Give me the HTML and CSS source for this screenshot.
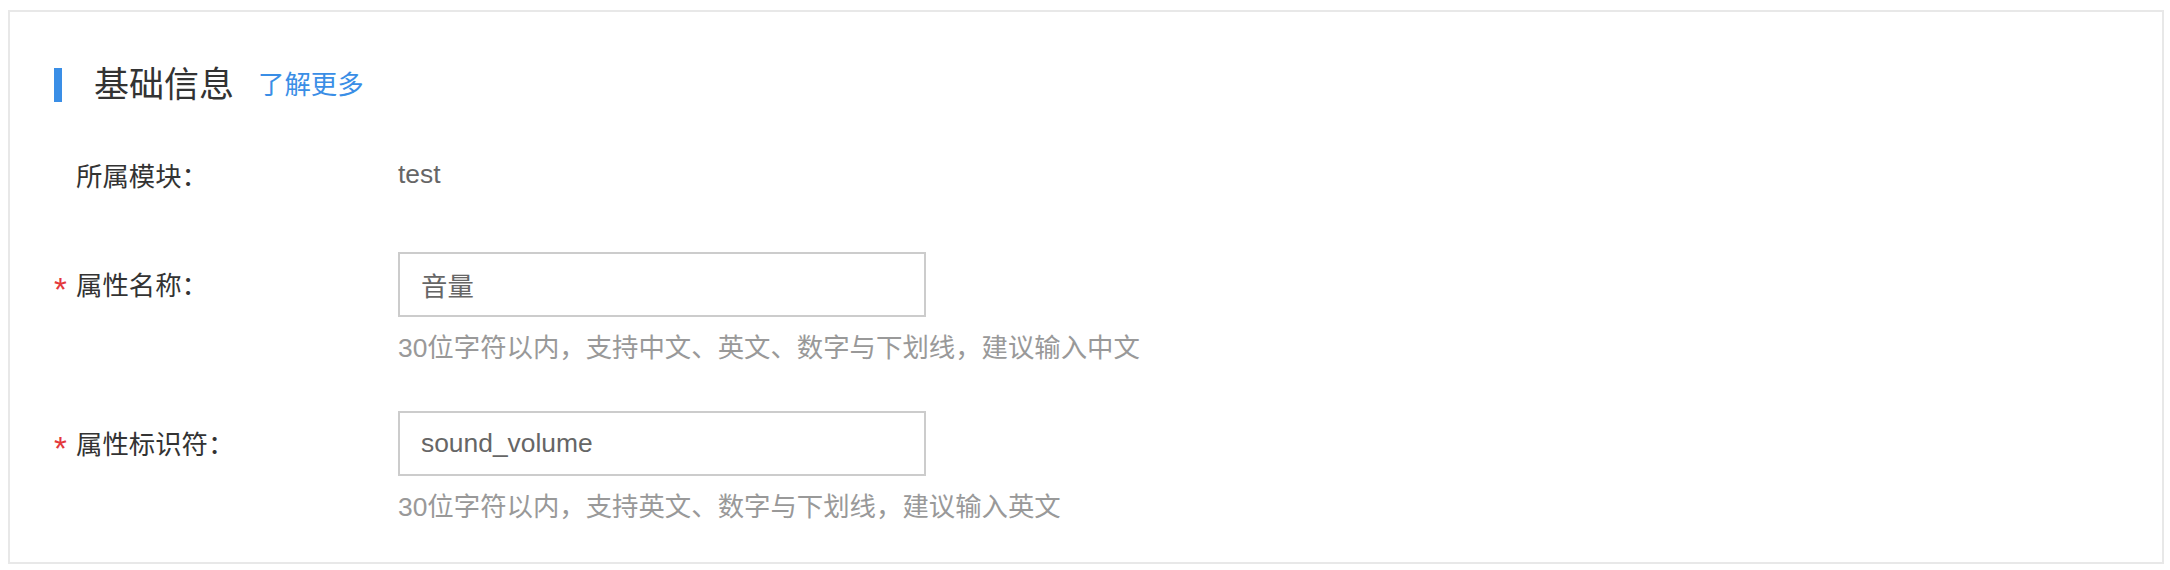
FILE: index.html
```html
<!DOCTYPE html>
<html>
<head>
    <title>基础信息</title>
    <link rel="stylesheet" href="styles.css">
</head>
<body>
    <div class="panel">
        <div class="panel-header">
            <span class="header-bar"></span>
            <h2 class="header-title">基础信息</h2>
            <a class="header-link" href="#">了解更多</a>
        </div>

        <div class="form-item first">
            <div class="form-row">
                <label class="form-label"><span class="required"></span>所属模块：</label>
                <div class="form-value">test</div>
            </div>
        </div>

        <div class="form-item">
            <div class="form-row">
                <label class="form-label"><span class="required">*</span>属性名称：</label>
                <input class="form-input" type="text" value="音量">
            </div>
            <div class="form-hint">30位字符以内，支持中文、英文、数字与下划线，建议输入中文</div>
        </div>

        <div class="form-item spaced">
            <div class="form-row">
                <label class="form-label"><span class="required">*</span>属性标识符：</label>
                <input class="form-input" type="text" value="sound_volume">
            </div>
            <div class="form-hint">30位字符以内，支持英文、数字与下划线，建议输入英文</div>
        </div>
    </div>
</body>
</html>
```

FILE: styles.css
```css
body {
    margin: 0;
    background: #fff;
    font-family: "Liberation Sans", "Noto Sans CJK SC", sans-serif;
    color: #333;
}
.panel {
    margin: 10px 6px 6px 8px;
    border: 2px solid #e8e8e8;
    padding: 56px 44px 38px;
}
.panel-header {
    display: flex;
    align-items: center;
    height: 34px;
}
.header-bar {
    width: 8px;
    height: 34px;
    background: #3a8ee6;
}
.header-title {
    margin: 0 0 0 32px;
    font-size: 35px;
    font-weight: normal;
    line-height: 34px;
    color: #333;
}
.header-link {
    margin-left: 24px;
    font-size: 26.4px;
    line-height: 34px;
    color: #3a8ee6;
    text-decoration: none;
}
.form-item {
    margin-top: 45px;
}
.form-item.first {
    margin-top: 40px;
}
.form-item.spaced {
    margin-top: 46px;
}
.form-row {
    display: flex;
    align-items: center;
    height: 65px;
}
.form-label {
    width: 344px;
    font-size: 26.4px;
    color: #333;
}
.required {
    display: inline-block;
    width: 22px;
    font-size: 33px;
    line-height: 1;
    vertical-align: -6px;
    color: #e4393c;
}
.form-value {
    font-size: 26.4px;
    color: #666;
}
.form-input {
    box-sizing: border-box;
    width: 528px;
    height: 65px;
    margin: 0;
    padding: 0 21px;
    border: 2px solid #ccc;
    outline: none;
    font-family: inherit;
    font-size: 26.4px;
    color: #666;
    background: #fff;
}
.form-hint {
    margin: 14px 0 0 344px;
    font-size: 26.4px;
    line-height: 34px;
    color: #999;
}
```
